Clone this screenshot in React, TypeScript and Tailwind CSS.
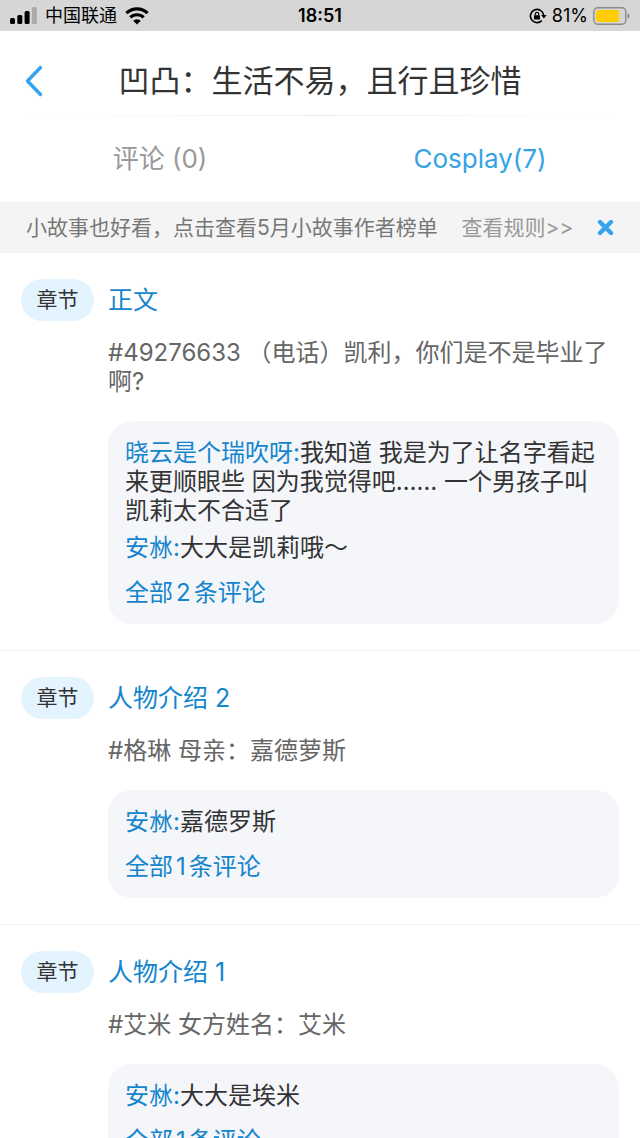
import { ReactNode } from 'react';

type Comment = { user: string; text: string };
type Chapter = { title: string; quote: string; total: number; comments: Comment[] };

const chapters: Chapter[] = [
  {
    title: '正文',
    quote: '#49276633 （电话）凯利，你们是不是毕业了啊?',
    total: 2,
    comments: [
      {
        user: '晓云是个瑞吹呀',
        text: '我知道 我是为了让名字看起来更顺眼些 因为我觉得吧…… 一个男孩子叫凯莉太不合适了',
      },
      { user: '安沝', text: '大大是凯莉哦～' },
    ],
  },
  {
    title: '人物介绍 2',
    quote: '#格琳 母亲：嘉德萝斯',
    total: 1,
    comments: [{ user: '安沝', text: '嘉德罗斯' }],
  },
  {
    title: '人物介绍 1',
    quote: '#艾米 女方姓名：艾米',
    total: 1,
    comments: [{ user: '安沝', text: '大大是埃米' }],
  },
];

function StatusBar() {
  return (
    <div className="grid h-[31px] shrink-0 grid-cols-3 items-center bg-[#d6d6d6] px-[10px] text-lg leading-6 text-black">
      <div className="flex items-center gap-2">
        <svg width="27" height="17" viewBox="0 0 27 17" aria-hidden="true">
          <rect x="0" y="11" width="5" height="6" rx="1.5" />
          <rect x="7.3" y="8" width="5" height="9" rx="1.5" />
          <rect x="14.6" y="4" width="5" height="13" rx="1.5" />
          <rect x="21.9" y="0" width="5" height="17" rx="1.5" fill="#aaa" />
        </svg>
        <span className="whitespace-nowrap">中国联通</span>
        <svg width="24" height="18" viewBox="0 0 24 18" aria-hidden="true">
          <path d="M1.4 6.2a15.2 15.2 0 0 1 21.2 0" fill="none" stroke="#000" strokeWidth="3.2" />
          <path d="M5.3 10.4a9.6 9.6 0 0 1 13.4 0" fill="none" stroke="#000" strokeWidth="3" />
          <path d="M12 17.5l-3.8-3.8a5.4 5.4 0 0 1 7.6 0z" />
        </svg>
      </div>
      <span className="text-center font-semibold">18:51</span>
      <div className="flex items-center justify-end gap-[5px]">
        <svg width="18" height="18" viewBox="0 0 18 18" fill="none" stroke="#000" aria-hidden="true">
          <path d="M12.8 13.6A6.6 6.6 0 1 1 14.6 8.2" strokeWidth="1.6" />
          <path d="M12.2 8h5.4l-2.7 3.6z" fill="#000" stroke="none" />
          <rect x="5" y="8.2" width="6" height="4.4" rx="0.6" fill="#000" stroke="none" />
          <path d="M6.3 8.4V7a1.7 1.7 0 0 1 3.4 0v1.4" strokeWidth="1.2" />
        </svg>
        <span>81%</span>
        <svg width="37" height="18" viewBox="0 0 37 18" aria-hidden="true">
          <rect x="0.8" y="0.8" width="32" height="16.4" rx="4" fill="none" stroke="#8a8a8a" strokeWidth="1.4" />
          <rect x="3" y="3" width="23" height="12" rx="2" fill="#fc0" />
          <path d="M34.6 6.2c2.4.8 2.4 4.8 0 5.6z" fill="#8a8a8a" />
        </svg>
      </div>
    </div>
  );
}

function Header({ children }: { children: ReactNode }) {
  return (
    <header className="shrink-0">
      <div className="grid h-[84px] grid-cols-[64px_1fr_64px] items-center pt-4">
        <button type="button" aria-label="返回" className="flex h-10 items-center pl-6">
          <svg width="20" height="32" viewBox="0 0 20 32" fill="none" stroke="#34a4ee" strokeWidth="3.4" strokeLinecap="round" strokeLinejoin="round">
            <path d="M16.5 2.5L3.5 16l13 13.5" />
          </svg>
        </button>
        <h1 className="text-center text-[31px] leading-10 whitespace-nowrap text-[#333]">{children}</h1>
      </div>
      <div className="mx-5 h-px bg-linear-to-r from-white via-[#eee] to-white" />
    </header>
  );
}

function Tabs() {
  return (
    <nav className="flex h-[86px] shrink-0 items-center text-[26px] leading-8">
      <button type="button" className="flex-1 text-[#999]">
        评论 (0)
      </button>
      <button type="button" className="flex-1 text-[#34a4e4]">
        Cosplay(7)
      </button>
    </nav>
  );
}

function Notice() {
  return (
    <div className="flex h-[51px] shrink-0 items-center justify-between bg-[#f4f4f4] px-[26px] text-[21px] leading-7 whitespace-nowrap">
      <span className="text-[#777]">小故事也好看，点击查看5月小故事作者榜单</span>
      <a href="#rules" className="text-[#999]">
        查看规则&gt;&gt;
      </a>
      <button type="button" aria-label="关闭">
        <svg width="17" height="17" viewBox="0 0 17 17" stroke="#34a4ee" strokeWidth="4.4" strokeLinecap="round">
          <path d="M3 3l11 11M14 3L3 14" />
        </svg>
      </button>
    </div>
  );
}

function ChapterItem({ chapter }: { chapter: Chapter }) {
  return (
    <section className="flex gap-[14px] border-b border-[#f0f0f0] px-[21px] py-[26px]">
      <span className="flex h-[42px] w-[73px] shrink-0 items-center justify-center rounded-full bg-[#e3f4ff] text-[21px] text-[#333]">
        章节
      </span>
      <div className="min-w-0 flex-1">
        <h2 className="text-[25px] leading-[42px] text-[#1485cc]">{chapter.title}</h2>
        <p className="mt-[17px] text-2xl leading-[29px] text-[#666]">{chapter.quote}</p>
        <div className="mt-[25px] flex flex-col gap-2 rounded-3xl bg-[#f4f6fa] p-[17px] text-2xl leading-[29px] text-[#333]">
          {chapter.comments.map((c) => (
            <p key={c.text}>
              <a href="#user" className="text-[#1485cc]">
                {c.user}:
              </a>
              {c.text}
            </p>
          ))}
          <a href="#all" className="mt-2 text-[#1485cc]">
            全部<span className="mx-[3px]">{chapter.total}</span>条评论
          </a>
        </div>
      </div>
    </section>
  );
}

export default function App() {
  return (
    <div
      lang="zh-CN"
      className="flex h-screen flex-col bg-white font-['Inter','Noto_Sans_CJK_SC',sans-serif]"
    >
      <StatusBar />
      <Header>凹凸：生活不易，且行且珍惜</Header>
      <Tabs />
      <Notice />
      <main className="min-h-0 flex-1 overflow-y-auto [scrollbar-width:none]">
        {chapters.map((chapter) => (
          <ChapterItem key={chapter.title} chapter={chapter} />
        ))}
      </main>
    </div>
  );
}
